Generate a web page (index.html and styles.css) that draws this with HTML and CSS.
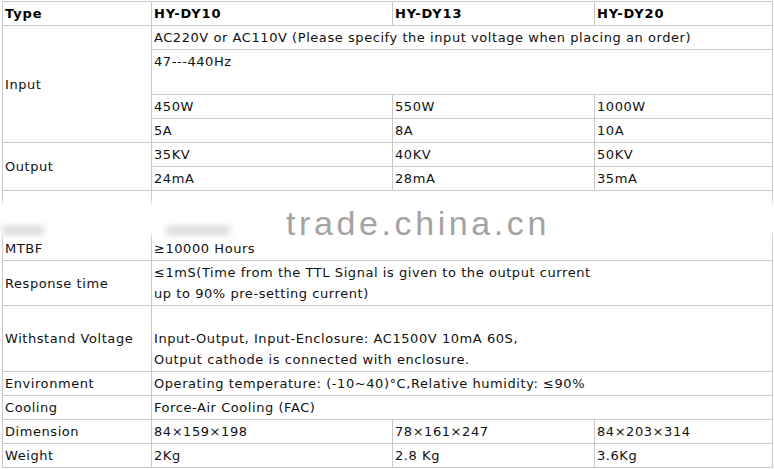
FILE: index.html
```html
<!DOCTYPE html>
<html>
<head>
<meta charset="utf-8">
<link rel="stylesheet" href="styles.css">
</head>
<body>
<div class="page">
<table class="spec">
  <colgroup>
    <col class="c1"><col class="c2"><col class="c3"><col class="c4">
  </colgroup>
  <tr class="head"><td>Type</td><td>HY-DY10</td><td>HY-DY13</td><td>HY-DY20</td></tr>
  <tr><td rowspan="4">Input</td><td colspan="3">AC220V or AC110V (Please specify the input voltage when placing an order)</td></tr>
  <tr><td colspan="3">47---440Hz<br>&nbsp;</td></tr>
  <tr><td>450W</td><td>550W</td><td>1000W</td></tr>
  <tr><td>5A</td><td>8A</td><td>10A</td></tr>
  <tr><td rowspan="2">Output</td><td>35KV</td><td>40KV</td><td>50KV</td></tr>
  <tr><td>24mA</td><td>28mA</td><td>35mA</td></tr>
  <tr class="blank"><td></td><td colspan="3"></td></tr>
  <tr class="mtbf"><td>MTBF</td><td colspan="3">≥10000 Hours</td></tr>
  <tr><td>Response time</td><td colspan="3">≤1mS(Time from the TTL Signal is given to the output current<br>up to 90% pre-setting current)</td></tr>
  <tr class="tall"><td>Withstand Voltage</td><td colspan="3">&nbsp;<br>Input-Output, Input-Enclosure: AC1500V 10mA 60S,<br>Output cathode is connected with enclosure.</td></tr>
  <tr><td>Environment</td><td colspan="3">Operating temperature: (-10~40)°C,Relative humidity: ≤90%</td></tr>
  <tr><td>Cooling</td><td colspan="3">Force-Air Cooling (FAC)</td></tr>
  <tr><td>Dimension</td><td>84×159×198</td><td>78×161×247</td><td>84×203×314</td></tr>
  <tr><td>Weight</td><td>2Kg</td><td>2.8 Kg</td><td>3.6Kg</td></tr>
</table>
<div class="glow"></div>
<div class="smudge s1"></div>
<div class="smudge s2"></div>
<div class="watermark">trade.china.cn</div>
</div>
</body>
</html>
```
FILE: styles.css
```css
html, body {
  margin: 0;
  padding: 0;
  background: #fff;
}
.page {
  position: relative;
  width: 774px;
  height: 469px;
  overflow: hidden;
  padding: 1px 0 0 2px;
  box-sizing: border-box;
}
.spec {
  border-collapse: collapse;
  table-layout: fixed;
  width: 770px;
  font-family: "DejaVu Sans", Verdana, sans-serif;
  font-size: 13px;
  letter-spacing: 0.56px;
  color: #111;
}
.c1 { width: 149px; }
.c2 { width: 241px; }
.c3 { width: 202px; }
.c4 { width: 178px; }
.spec td {
  border: 1px solid #c8c8c8;
  padding: 1px 2px 1px 2px;
  line-height: 21px;
  vertical-align: middle;
  white-space: nowrap;
  overflow: visible;
}
.head td {
  font-weight: bold;
  letter-spacing: 0.9px;
  color: #000;
}
.blank td {
  height: 44px;
  border-bottom: none;
}
.mtbf td {
  border-top: none;
  vertical-align: bottom;
}
.glow {
  position: absolute;
  left: -10px;
  top: 202px;
  width: 800px;
  height: 34px;
  background: #fff;
  filter: blur(3px);
}
.smudge {
  position: absolute;
  height: 9px;
  background: #dadada;
  filter: blur(3px);
}
.s1 { left: 2px; top: 226px; width: 42px; }
.s2 { left: 166px; top: 226px; width: 64px; }
.watermark {
  position: absolute;
  left: 286px;
  top: 203px;
  font-family: "Liberation Sans", Arial, sans-serif;
  font-size: 34px;
  letter-spacing: 3.6px;
  color: #a3a3a3;
  line-height: 40px;
}
```
